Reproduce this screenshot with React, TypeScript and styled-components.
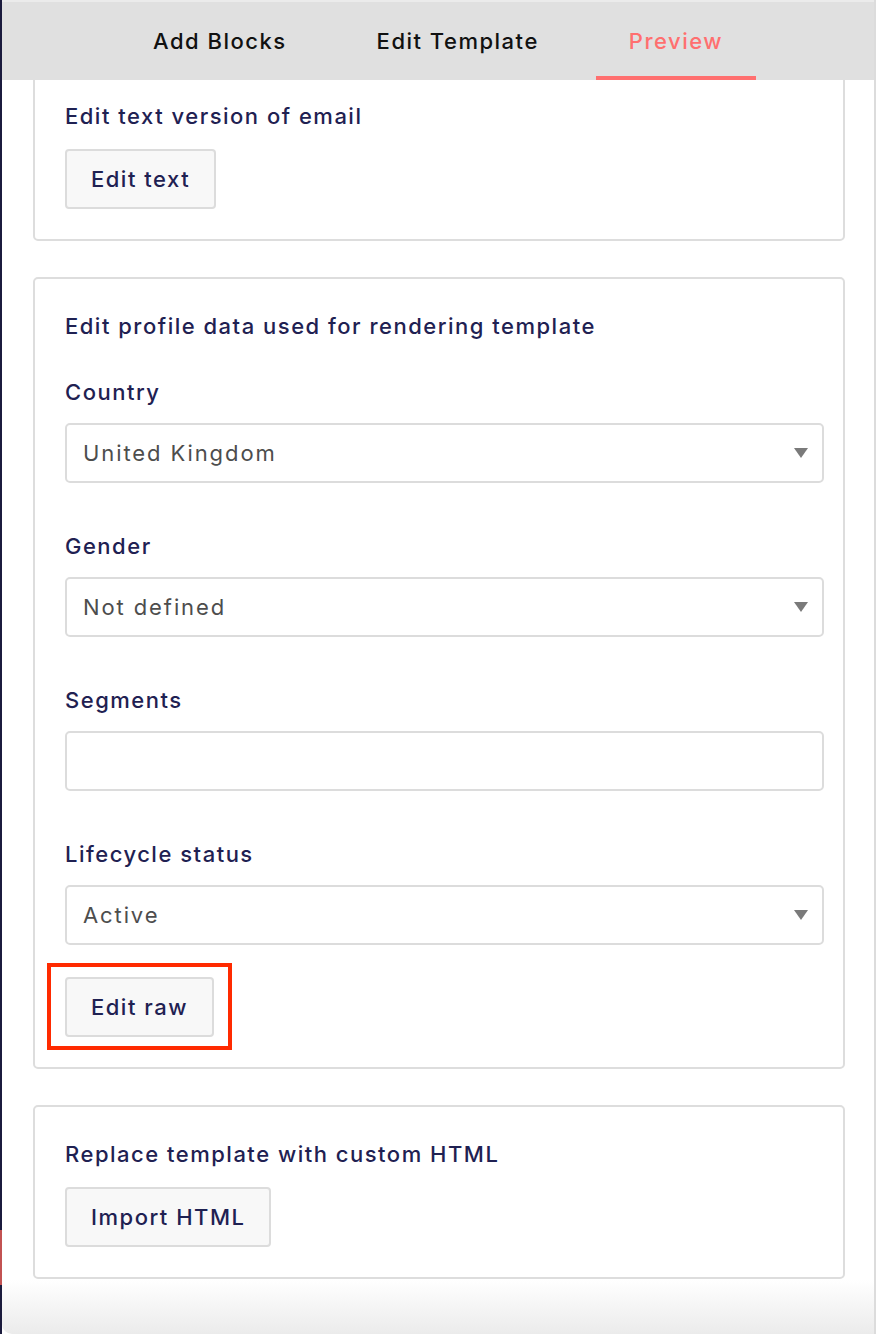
import React from "react";
import styled, { createGlobalStyle } from "styled-components";

const GlobalStyle = createGlobalStyle`
  html, body {
    margin: 0;
    padding: 0;
    background: #ffffff;
  }
  body {
    font-family: Inter, "Noto Sans", "DejaVu Sans", sans-serif;
  }
`;

const Screen = styled.div`
  display: flex;
  width: 878px;
  height: 1334px;
  overflow: hidden;
  background: #ffffff;
`;

// strip of the app behind the side panel
const BackStrip = styled.div`
  width: 2px;
  flex-shrink: 0;
  background: linear-gradient(
    to bottom,
    #1b1b3d 0,
    #1b1b3d 1230px,
    #c25252 1230px,
    #c25252 1285px,
    #1b1b3d 1285px
  );
`;

const Panel = styled.div`
  display: flex;
  flex-direction: column;
  width: 872px;
  border-right: 2px solid #dcdcdc;
  border-bottom-left-radius: 10px;
  background: linear-gradient(to bottom, #ffffff 0, #ffffff 1280px, #ebebeb 1334px);
  overflow: hidden;
`;

const TabBar = styled.div`
  display: flex;
  justify-content: center;
  gap: 24px;
  height: 78px;
  flex-shrink: 0;
  border-top: 2px solid #ebebeb;
  background: #e0e0e0;
  position: relative;
  z-index: 1;
`;

const Tab = styled.div<{ $active?: boolean }>`
  display: flex;
  align-items: center;
  justify-content: center;
  padding: 4px 33px 0;
  font-size: 22px;
  font-weight: 500;
  letter-spacing: 1.5px;
  color: ${(p) => (p.$active ? "#ff6f6f" : "#111111")};
  border-bottom: 4px solid ${(p) => (p.$active ? "#ff6f6f" : "transparent")};
`;

const Content = styled.div`
  display: flex;
  flex-direction: column;
  gap: 36px;
  padding: 0 29px 0 31px;
  margin-top: -11px;
`;

const Card = styled.section<{ $clipped?: boolean }>`
  display: flex;
  flex-direction: column;
  align-items: flex-start;
  border: 2px solid #dddddd;
  border-radius: 5px;
  padding: ${(p) => (p.$clipped ? "30px" : "32px")} 19px 30px 30px;
  ${(p) => (p.$clipped ? "border-top-left-radius: 0; border-top-right-radius: 0;" : "")}
`;

const Heading = styled.h3<{ $tight?: boolean }>`
  margin: 0 0 ${(p) => (p.$tight ? "0" : "18px")};
  font-size: 22px;
  line-height: 30px;
  font-weight: 500;
  letter-spacing: 1.5px;
  color: #1f2152;
`;

const Button = styled.button`
  height: 60px;
  padding: 0 24px;
  border: 2px solid #dcdcdc;
  border-radius: 4px;
  background: #f8f8f8;
  font-family: inherit;
  font-size: 22px;
  font-weight: 500;
  letter-spacing: 1.5px;
  color: #1f2152;
  cursor: pointer;
`;

const Field = styled.div`
  display: flex;
  flex-direction: column;
  align-self: stretch;
  gap: 16px;
  margin-top: 36px;

  & + & {
    margin-top: 48px;
  }
`;

const Label = styled.label`
  font-size: 22px;
  line-height: 30px;
  font-weight: 500;
  letter-spacing: 1.5px;
  color: #1f2152;
`;

const Box = styled.div`
  display: flex;
  align-items: center;
  justify-content: space-between;
  box-sizing: border-box;
  height: 60px;
  padding: 0 14px 0 16px;
  border: 2px solid #dcdcdc;
  border-radius: 5px;
  background: #ffffff;
  font-size: 22px;
  letter-spacing: 1.9px;
  color: #4d4d4d;
`;

const Caret = styled.span`
  width: 0;
  height: 0;
  border-left: 7px solid transparent;
  border-right: 7px solid transparent;
  border-top: 10px solid #7a7a7a;
`;

const Highlight = styled.div`
  margin: 18px 0 -13px -18px;
  padding: 10px 14px 9px;
  border: 4px solid #ff2a00;
`;

const Select = ({ value }: { value: string }) => (
  <Box>
    <span>{value}</span>
    <Caret />
  </Box>
);

const App = () => {
  return (
    <Screen>
      <GlobalStyle />
      <BackStrip />
      <Panel>
        <TabBar>
          <Tab>Add Blocks</Tab>
          <Tab>Edit Template</Tab>
          <Tab $active>Preview</Tab>
        </TabBar>
        <Content>
          <Card $clipped>
            <Heading>Edit text version of email</Heading>
            <Button>Edit text</Button>
          </Card>

          <Card>
            <Heading $tight>Edit profile data used for rendering template</Heading>
            <Field>
              <Label>Country</Label>
              <Select value="United Kingdom" />
            </Field>
            <Field>
              <Label>Gender</Label>
              <Select value="Not defined" />
            </Field>
            <Field>
              <Label>Segments</Label>
              <Box />
            </Field>
            <Field>
              <Label>Lifecycle status</Label>
              <Select value="Active" />
            </Field>
            <Highlight>
              <Button>Edit raw</Button>
            </Highlight>
          </Card>

          <Card>
            <Heading>Replace template with custom HTML</Heading>
            <Button>Import HTML</Button>
          </Card>
        </Content>
      </Panel>
    </Screen>
  );
};

export default App;
